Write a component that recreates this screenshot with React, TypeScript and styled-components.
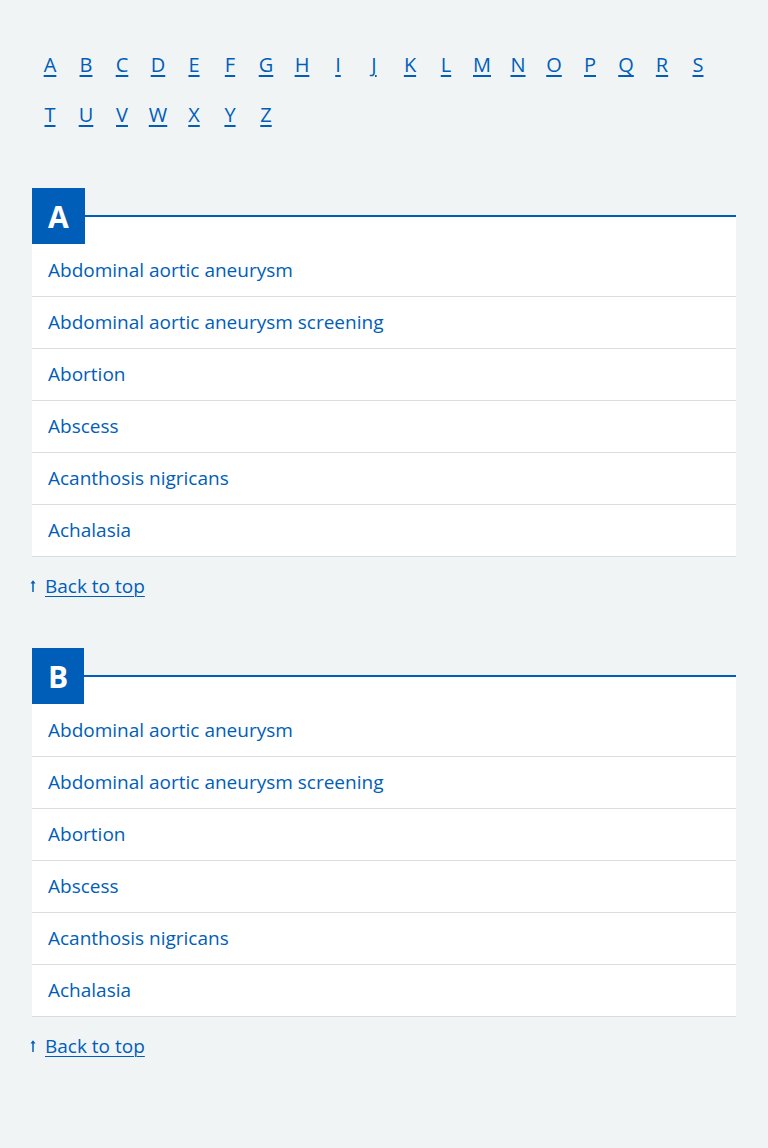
import React from "react";
import styled, { createGlobalStyle } from "styled-components";

const GlobalStyle = createGlobalStyle`
  html, body {
    margin: 0;
    padding: 0;
    background: #f0f4f5;
  }
  body {
    font-family: "Open Sans", "Noto Sans", Arial, sans-serif;
    color: #212b32;
    min-height: 1148px;
  }
`;

const BLUE = "#005eb8";

const Page = styled.main`
  padding: 40px 32px 40px;
`;

const AZNav = styled.ul`
  list-style: none;
  margin: 0;
  padding: 0;
  display: flex;
  flex-wrap: wrap;
`;

const AZItem = styled.li`
  width: 36px;
  height: 50px;
  display: flex;
  align-items: center;
  justify-content: center;
`;

const AZLink = styled.a`
  color: ${BLUE};
  font-size: 20px;
  line-height: 28px;
  text-decoration: underline;
  text-decoration-thickness: 2px;
  text-underline-offset: 3px;
`;

const Section = styled.section`
  position: relative;
  margin-top: 48px;
  padding-top: 27px;
`;

const Label = styled.h2`
  position: absolute;
  top: 0;
  left: 0;
  margin: 0;
  height: 56px;
  padding: 0 16px;
  display: flex;
  align-items: center;
  background: ${BLUE};
  color: #fff;
  font-size: 30px;
  font-weight: 700;
`;

const Panel = styled.ul`
  list-style: none;
  margin: 0;
  padding: 28px 0 0;
  background: #fff;
  border-top: 2px solid ${BLUE};
`;

const Row = styled.li`
  height: 51px;
  border-bottom: 1px solid #d8dde0;
  display: flex;
  align-items: center;
  padding: 0 16px;
`;

const RowLink = styled.a`
  color: ${BLUE};
  font-size: 19px;
  line-height: 28px;
  padding-bottom: 2px;
  text-decoration: none;
`;

const BackToTop = styled.a`
  display: flex;
  align-items: center;
  gap: 9px;
  margin-top: 15px;
  margin-left: -2px;
  color: ${BLUE};
  font-size: 19px;
  line-height: 28px;
  text-decoration: none;
`;

const BackText = styled.span`
  text-decoration: underline;
  text-decoration-thickness: 1px;
  text-underline-offset: 3px;
`;

const ArrowIcon = () => (
  <svg width="6" height="14" viewBox="0 0 6 14" aria-hidden="true">
    <path d="M3 13V3" stroke={BLUE} strokeWidth="1.5" fill="none" />
    <path d="M0.5 4.5L3 1.2L5.5 4.5Z" fill={BLUE} />
  </svg>
);

const letters = "ABCDEFGHIJKLMNOPQRSTUVWXYZ".split("");
const conditions = [
  "Abdominal aortic aneurysm",
  "Abdominal aortic aneurysm screening",
  "Abortion",
  "Abscess",
  "Acanthosis nigricans",
  "Achalasia",
];

export default function App() {
  return (
    <>
      <GlobalStyle />
      <Page>
        <nav aria-label="A to Z">
          <AZNav>
            {letters.map((l) => (
              <AZItem key={l}>
                <AZLink href={`#${l}`}>{l}</AZLink>
              </AZItem>
            ))}
          </AZNav>
        </nav>
        {["A", "B"].map((letter) => (
          <div key={letter}>
            <Section id={letter}>
              <Label>{letter}</Label>
              <Panel>
                {conditions.map((c) => (
                  <Row key={c}>
                    <RowLink href="#">{c}</RowLink>
                  </Row>
                ))}
              </Panel>
            </Section>
            <BackToTop href="#">
              <ArrowIcon />
              <BackText>Back to top</BackText>
            </BackToTop>
          </div>
        ))}
      </Page>
    </>
  );
}
